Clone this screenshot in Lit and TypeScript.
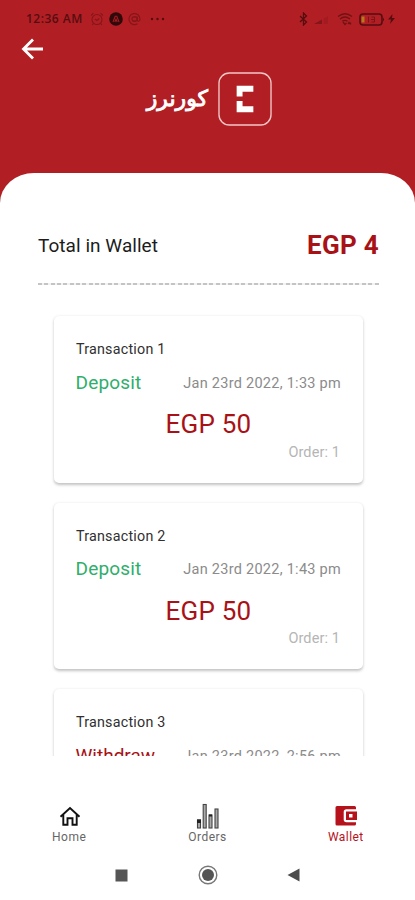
import { LitElement, html, svg, css, nothing } from "lit";
import { customElement, property } from "lit/decorators.js";

interface Transaction {
  id: number;
  kind: "Deposit" | "Withdraw";
  date: string;
  amount?: number;
  order?: number;
}

const transactions: Transaction[] = [
  { id: 1, kind: "Deposit", date: "Jan 23rd 2022, 1:33 pm", amount: 50, order: 1 },
  { id: 2, kind: "Deposit", date: "Jan 23rd 2022, 1:43 pm", amount: 50, order: 1 },
  { id: 3, kind: "Withdraw", date: "Jan 23rd 2022, 2:56 pm" },
];

@customElement("status-bar")
class StatusBar extends LitElement {
  static styles = css`
    :host {
      display: flex;
      justify-content: space-between;
      height: 38px;
      padding: 0 20px 0 26px;
      box-sizing: border-box;
      align-items: center;
      color: #560d10;
    }
    .side { display: flex; align-items: center; height: 16px; }
    .time { font: 600 12px/16px "Open Sans", sans-serif; width: 64px; white-space: nowrap; letter-spacing: 0.5px; }
    svg { display: block; flex: none; }
    .alarm { margin-right: 5px; color: #861519; }
    .app { margin-right: 5px; color: #30090a; }
    .at { margin-right: 9px; color: #861519; }
    .bt { margin-right: 6px; }
    .signal { margin-right: 8px; color: #861519; }
    .wifi { margin-right: 6px; color: #701215; }
    .battery { margin-right: 3px; }
  `;
  render() {
    return html`
      <div class="side">
        <span class="time">12:36 AM</span>
        <svg class="alarm" width="14" height="14" viewBox="0 0 14 14" fill="none" stroke="currentColor" stroke-width="1.1">
          <circle cx="7" cy="7.5" r="5" /><path d="M1 3.5 3.5 1.2M13 3.5 10.5 1.2M4.8 7l2.2 1.5 2.3-2M3.3 11.5 2.2 13M10.7 11.5l1.1 1.5" />
        </svg>
        <svg class="app" width="14" height="14" viewBox="0 0 14 14">
          <circle cx="7" cy="7" r="6.8" fill="currentColor" />
          <path d="M4 10 6.2 4.3h1.6L10 10M5.8 10 7 7.2 8.2 10" fill="none" stroke="#a31c21" stroke-width="1.1" />
        </svg>
        <svg class="at" width="13" height="14" viewBox="0 0 13 14" fill="none" stroke="currentColor" stroke-width="1.2">
          <path d="M9.5 11.7A5.5 5.5 0 1 1 12 7c0 3-2.8 2.8-2.8.6V4.5" /><circle cx="6.5" cy="7" r="2.5" /><path d="M4 5.5h5M4 8.5h5" stroke-width=".7" />
        </svg>
        <svg width="15" height="4" viewBox="0 0 15 4" fill="currentColor">
          <circle cx="2" cy="2" r="1.2" /><circle cx="7.5" cy="2" r="1.2" /><circle cx="13" cy="2" r="1.2" />
        </svg>
      </div>
      <div class="side">
        <svg class="bt" width="9" height="14" viewBox="0 0 9 14" fill="none" stroke="currentColor" stroke-width="1.3">
          <path d="m1 4 6.500 6L4.500 13V1l3 3L1 10" />
        </svg>
        <svg class="signal" width="15" height="12" viewBox="0 0 15 12" fill="currentColor">
          <path d="M0 11 8 6.500V11Z" /><path d="M9.500 11V5.500L14 3v8Z" opacity=".3" />
        </svg>
        <svg class="wifi" width="16" height="14" viewBox="0 0 16 14" fill="none" stroke="currentColor" stroke-width="1.3">
          <path d="M1 4.500q7-5.500 14 0M3 7q5-4 10 0M5.300 9.300q2.700-2 5.200 0" /><path d="m6 10 2 2.500 1.500-1.500M11 12l1-1.500 1 1.500M13.500 10.500v2" />
        </svg>
        <svg class="battery" width="26" height="13" viewBox="0 0 26 13">
          <rect x="1" y="1" width="22" height="11" rx="3" fill="none" stroke="currentColor" stroke-width="1.6" />
          <path d="M24 4.500q2 2 0 4Z" fill="currentColor" />
          <rect x="2.5" y="3.5" width="3" height="6" fill="#b8791d" />
          <path d="M9.500 3.500v6M12.500 4h3v5h-3M12 6.500h3.500" stroke="#7a1417" fill="none" />
        </svg>
        <svg width="7" height="10" viewBox="0 0 7 10" fill="currentColor"><path d="M4.500 0 0 5.500h3L2 10l5-6H4Z" /></svg>
      </div>
    `;
  }
}

@customElement("transaction-card")
class TransactionCard extends LitElement {
  @property({ attribute: false }) item!: Transaction;
  static styles = css`
    :host {
      display: block;
      flex: none;
      height: 166.5px;
      box-sizing: border-box;
      padding: 22px 22px 0;
      border-radius: 5px;
      background: #fff;
      box-shadow: 0 1.5px 3px rgba(0, 0, 0, 0.24);
    }
    .title { font-size: 14.3px; line-height: 22px; color: #303030; letter-spacing: 0.22px; }
    .row { display: flex; justify-content: space-between; align-items: center; height: 24px; margin-top: 11px; }
    .kind { font-size: 19px; line-height: 22px; margin: -1px 0 0 -0.5px; letter-spacing: 0.18px; }
    .deposit { color: #2fae6b; }
    .withdraw { color: #a81217; letter-spacing: 0; }
    .date { font-size: 14.5px; color: #8b8b8b; letter-spacing: 0.27px; }
    .amount { margin-top: 13px; font-size: 26px; line-height: 32px; text-align: center; color: #a81217; letter-spacing: 0.2px; }
    .order { margin-top: 2.5px; padding-right: 1px; font-size: 14.5px; line-height: 20px; text-align: right; color: #b5b5b5; letter-spacing: 0.1px; }
  `;
  render() {
    const t = this.item;
    return html`
      <div class="title">Transaction ${t.id}</div>
      <div class="row">
        <span class="kind ${t.kind.toLowerCase()}">${t.kind}</span>
        <span class="date">${t.date}</span>
      </div>
      ${t.amount === undefined ? nothing : html`<div class="amount">EGP ${t.amount}</div>`}
      ${t.order === undefined ? nothing : html`<div class="order">Order: ${t.order}</div>`}
    `;
  }
}

@customElement("app-root")
class AppRoot extends LitElement {
  static styles = css`
    :host {
      display: flex;
      flex-direction: column;
      height: 900px;
      overflow: hidden;
      background: #b11f24;
      font-family: Roboto, sans-serif;
    }
    svg { display: block; flex: none; }
    header { height: 172.5px; flex: none; }
    .back { height: 22px; padding-left: 21px; }
    .brand { display: flex; justify-content: flex-end; align-items: center; gap: 10px; margin-top: 12px; padding-right: 143px; height: 54px; color: #fff; }
    .name { font: 400 22px/36px "DejaVu Sans", sans-serif; -webkit-text-stroke: 0.9px #fff; }
    main {
      flex: 1;
      min-height: 0;
      display: flex;
      flex-direction: column;
      background: #fff;
      border-radius: 34px 34px 0 0 / 30px 30px 0 0;
    }
    .total { display: flex; justify-content: space-between; align-items: center; height: 36px; margin: 54.5px 36px 0 38px; }
    .label { font-size: 19px; color: #1c1c1c; letter-spacing: 0.04px; }
    .sum { font-size: 26px; font-weight: 700; color: #a81217; letter-spacing: 0.3px; }
    .divider { flex: none; height: 2px; margin: 20px 36px 0 38px; background: repeating-linear-gradient(90deg, #c4c4c4 0 4px, #f2f2f2 4px 6.35px); }
    .list { flex: none; height: 456px; display: flex; flex-direction: column; gap: 20px; overflow: hidden; margin-top: 15px; padding: 16px 52px 0 54px; box-sizing: border-box; }
    .tabs { display: flex; flex: none; margin-top: 46px; height: 44px; }
    .tab { flex: 1; display: flex; flex-direction: column; align-items: center; font-size: 12px; line-height: 14px; color: #666; letter-spacing: 0.45px; }
    .tab svg { margin: 0 0 1px 1px; }
    .active { color: #b5121b; }
    .system { display: flex; align-items: center; height: 24px; margin-top: 17px; padding-left: 115px; }
    .circle { margin: 0 69px 0 69.5px; }
  `;
  render() {
    return html`
      <header>
        <status-bar></status-bar>
        <div class="back">
          <svg width="23" height="22" viewBox="0 0 23 22" fill="none" stroke="#fff" stroke-width="2.8">
            <path d="M22 11H2.500M12 1.500 2.500 11l9.500 9.500" />
          </svg>
        </div>
        <div class="brand">
          <span class="name" dir="rtl" lang="ar">كورنرز</span>
          <svg width="54" height="54" viewBox="0 0 55 55">
            <rect x="1" y="1" width="53" height="53" rx="10.5" fill="none" stroke="#f3c6c7" stroke-width="1.4" />
            <path d="M19 14h17v6H25v5h-6ZM19 29.500h6V35h11v6H19Z" fill="#fff" />
          </svg>
        </div>
      </header>
      <main>
        <div class="total"><span class="label">Total in Wallet</span><span class="sum">EGP 4</span></div>
        <div class="divider"></div>
        <div class="list">
          ${transactions.map((t) => html`<transaction-card .item=${t}></transaction-card>`)}
        </div>
        <nav class="tabs">
          <div class="tab">
            <svg width="28" height="27" viewBox="0 0 28 27" fill="none" stroke="#111" stroke-width="1.9">
              <path d="m4.500 14.800 9.500-8.700 9.500 8.700M7.300 12.800v10h4.200v-6.500h5v6.500h4.200v-10" />
            </svg>
            Home
          </div>
          <div class="tab">
            <svg width="24" height="27" viewBox="0 0 24 27">
              ${[[1.5, 18], [7.2, 2.5], [13, 13], [19, 7]].map(
                ([x, y]) => svg`<rect x=${x} y=${y} width="3" height=${26 - y} fill="#aaa" stroke="#444" stroke-width="1.1" />`
              )}
              <path d="M1 17.500h4v3.500H1ZM13 12.500h3v2h-3Z" fill="#222" />
            </svg>
            Orders
          </div>
          <div class="tab active">
            <svg width="24" height="27" viewBox="0 0 24 27">
              <path d="M3 4h17.500A1.500 1.500 0 0 1 22 5.500v1.700H12.500A2.800 2.800 0 0 0 9.700 10v7.500a2.800 2.800 0 0 0 2.800 2.800H22V22a1.500 1.500 0 0 1-1.500 1.500H3A1.500 1.500 0 0 1 1.500 22V5.500A1.500 1.500 0 0 1 3 4Z" fill="currentColor" />
              <path fill-rule="evenodd" d="M12 9.500h11v8.500H12ZM15 12v3.500h3.500V12Z" fill="currentColor" />
            </svg>
            Wallet
          </div>
        </nav>
        <div class="system">
          <svg width="13" height="13" viewBox="0 0 13 13"><rect x=".5" y=".5" width="12" height="12" fill="#555" /></svg>
          <svg class="circle" width="20" height="20" viewBox="0 0 20 20">
            <circle cx="10" cy="10" r="8.8" fill="none" stroke="#777" stroke-width="1.4" /><circle cx="10" cy="10" r="6" fill="#555" />
          </svg>
          <svg width="13" height="14" viewBox="0 0 13 14"><path d="M12.500.5v13L.5 7Z" fill="#4c4c4c" /></svg>
        </div>
      </main>
    `;
  }
}
